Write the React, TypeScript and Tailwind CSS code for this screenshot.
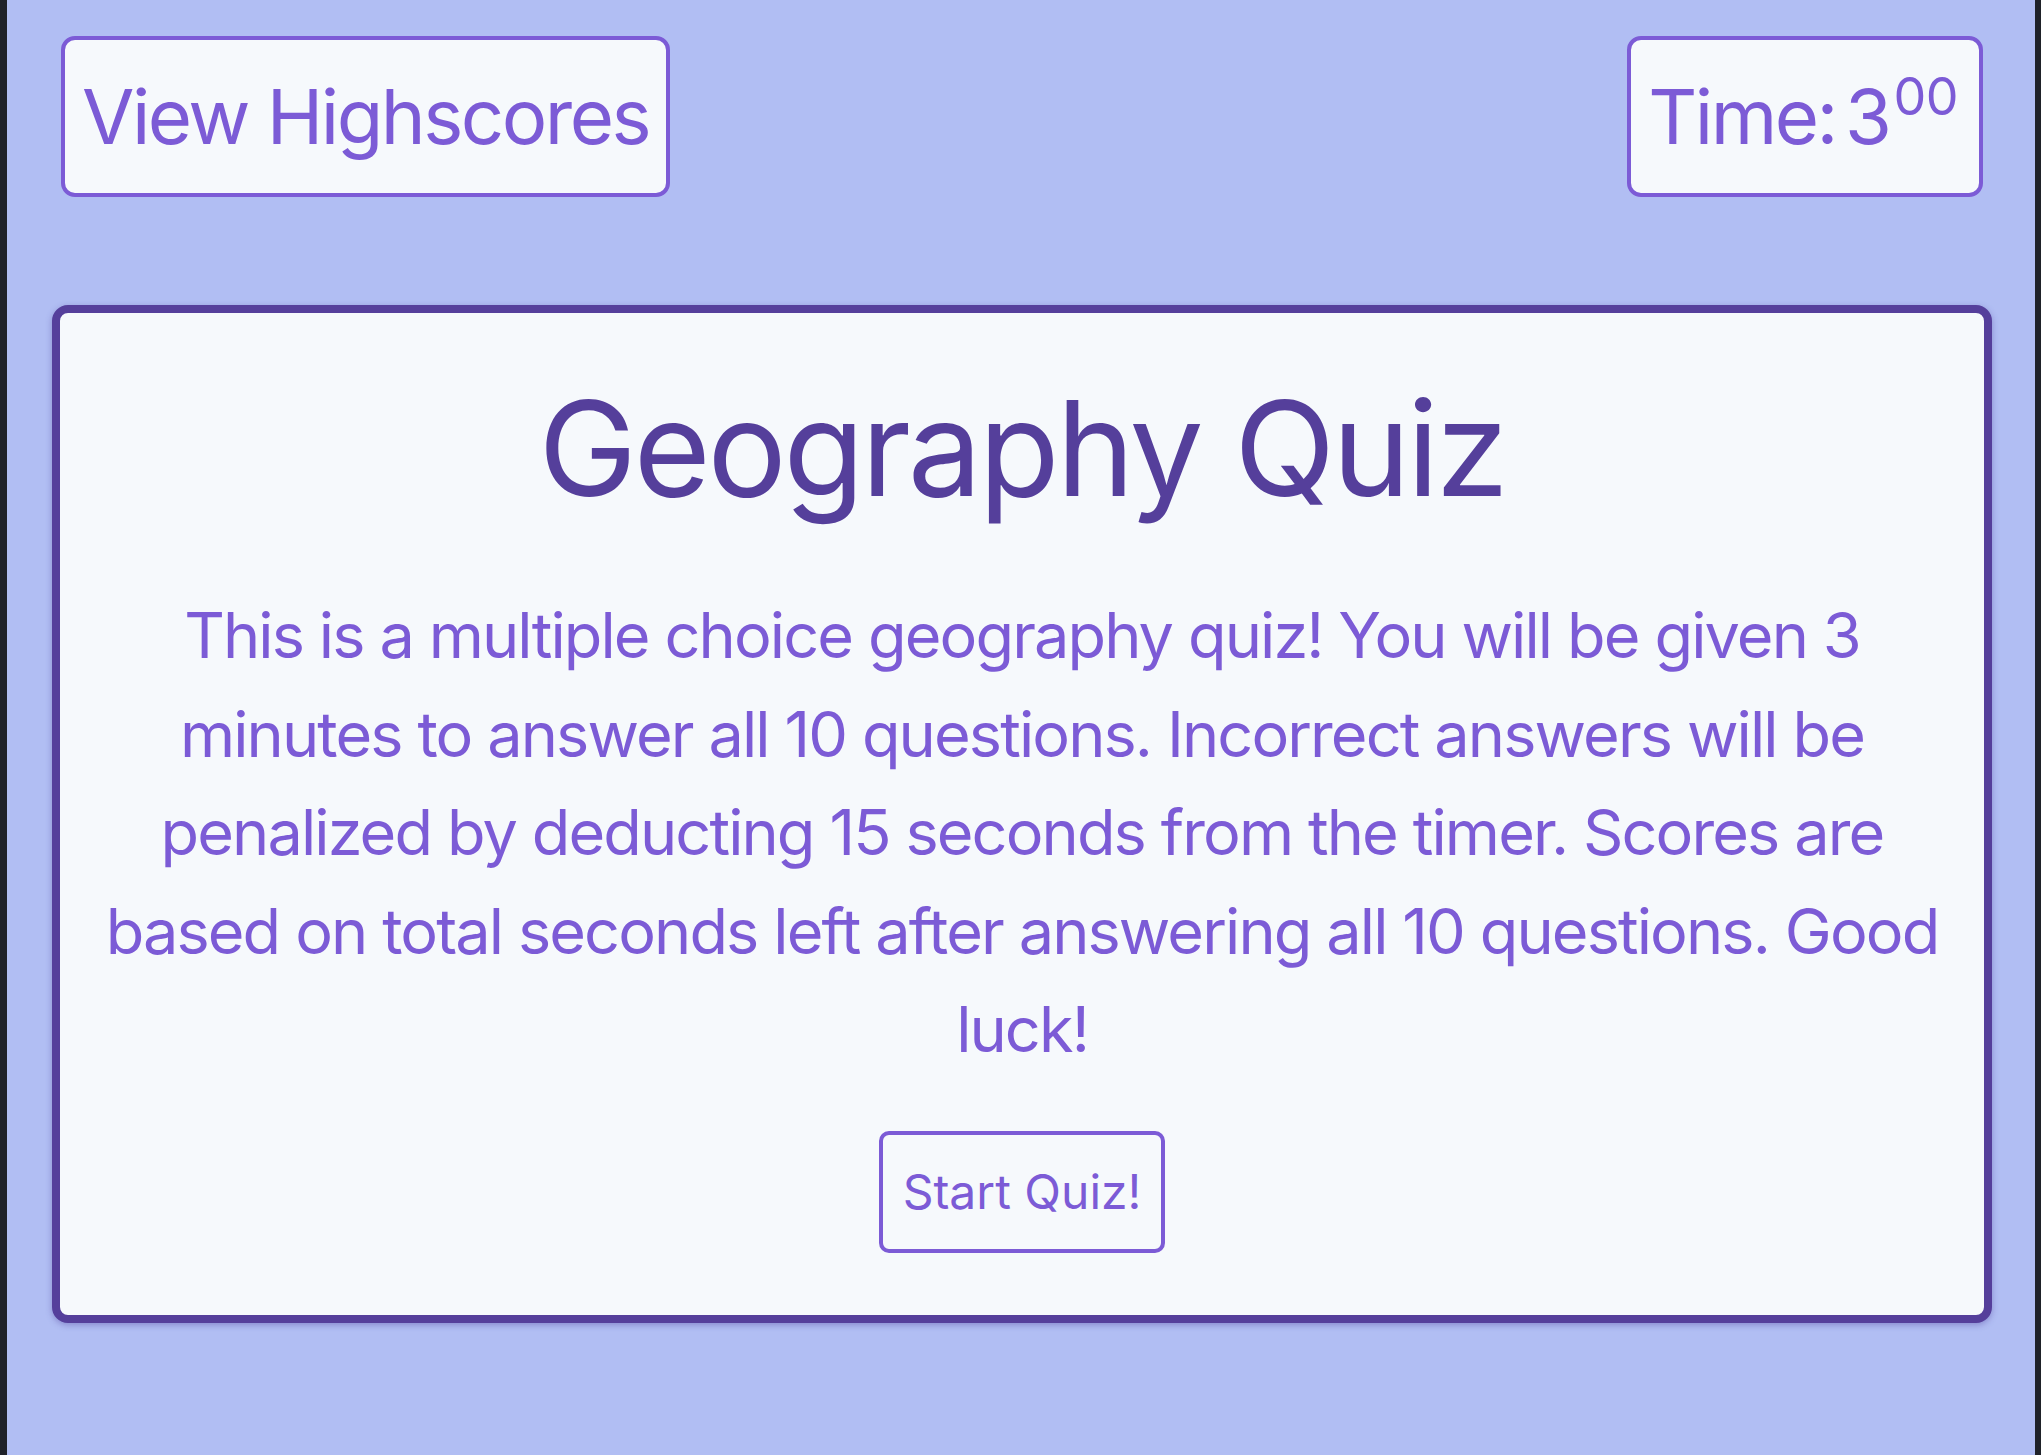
import React from "react";

export default function App() {
  return (
    <div
      className="flex min-h-screen w-full bg-[#b1bef3]"
      style={{ fontFamily: "Inter, 'Noto Sans', sans-serif" }}
    >
      <div className="w-[7px] shrink-0 bg-[#1f2229]" />
      <div className="flex min-w-0 flex-1 flex-col">
        <header className="flex items-start justify-between pl-[54px] pr-[52px] pt-[36px]">
          <button className="flex h-[161px] items-center rounded-[14px] border-4 border-[#7c5bd6] bg-[#f6f9fc] px-[17px] text-[76px] leading-[89px] tracking-[-0.033em] text-[#7c5bd6]">
            View Highscores
          </button>
          <div className="flex h-[161px] items-center rounded-[14px] border-4 border-[#7c5bd6] bg-[#f6f9fc] pl-[17px] pr-[21px] text-[76px] leading-[89px] tracking-[-0.033em] text-[#7c5bd6]">
            <span>Time:</span>
            <span className="ml-[9px]">3</span>
            <span className="relative top-[-20px] ml-[4px] text-[52px] leading-none tracking-[-0.01em]">00</span>
          </div>
        </header>

        <main className="ml-[45px] mr-[43px] mt-[108px] flex flex-col items-center rounded-[16px] border-8 border-[#553f9b] bg-[#f6f9fc] px-[22px] pb-[62px] pt-[56px] shadow-[0_2px_6px_rgba(60,40,140,0.35)]">
          <h1 className="text-center text-[132px] font-normal leading-[1.2] tracking-[-0.024em] text-[#553f9b]">
            Geography Quiz
          </h1>
          <p className="mt-[59px] w-full text-center text-[63px] leading-[98.5px] tracking-[-0.03em] text-[#7c5bd6]">
            This is a multiple choice geography quiz! You will be given 3 minutes to answer all 10
            questions. Incorrect answers will be penalized by deducting 15 seconds from the timer.
            Scores are based on total seconds left after answering all 10 questions. Good luck!
          </p>
          <button className="mt-[52px] flex h-[122px] items-center rounded-[10px] border-4 border-[#7c5bd6] bg-[#f6f9fc] px-[20px] text-[48px] leading-none text-[#7c5bd6]">
            Start Quiz!
          </button>
        </main>
        <div className="flex-1" />
      </div>
      <div className="w-[6px] shrink-0 bg-[#1f2229]" />
    </div>
  );
}
